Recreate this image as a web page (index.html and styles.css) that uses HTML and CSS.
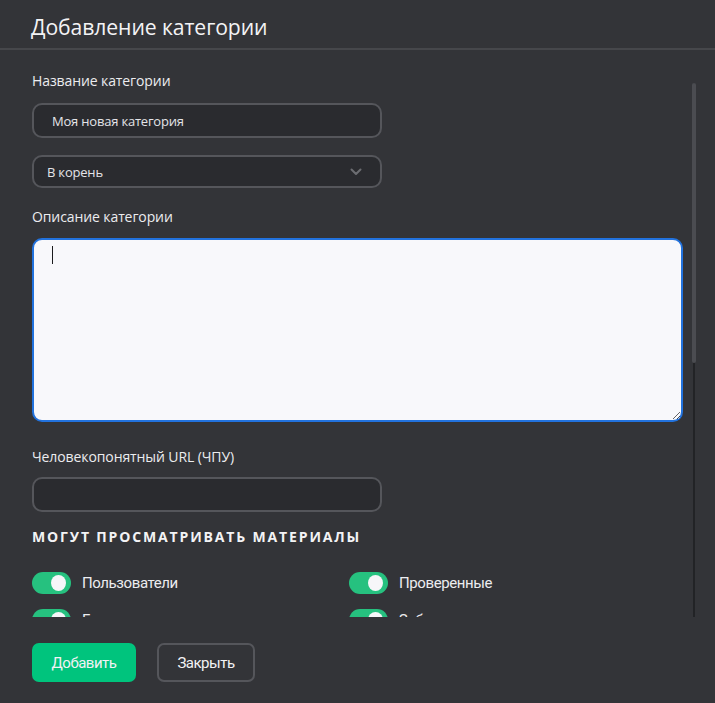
FILE: index.html
```html
<!DOCTYPE html>
<html lang="ru">
<head>
<meta charset="utf-8">
<title>Добавление категории</title>
<link rel="stylesheet" href="styles.css">
</head>
<body>
<div class="modal">
  <header class="modal-header">
    <h1 class="modal-title">Добавление категории</h1>
  </header>
  <div class="modal-body">
    <div class="form">
      <label class="label">Название категории</label>
      <div class="input input-text">Моя новая категория</div>
      <div class="input select">
        <span>В корень</span>
        <svg class="chevron" width="12" height="8" viewBox="0 0 12 8"><path d="M1.5 1.5 L6 6 L10.5 1.5" fill="none" stroke="#6c6d72" stroke-width="2" stroke-linecap="round" stroke-linejoin="round"/></svg>
      </div>
      <label class="label label-desc">Описание категории</label>
      <div class="textarea-wrap">
        <textarea class="textarea"></textarea>
        <span class="caret"></span>
      </div>
      <label class="label label-url">Человекопонятный URL (ЧПУ)</label>
      <div class="input input-url"></div>
      <h2 class="section-title">Могут просматривать материалы</h2>
      <div class="toggles">
        <div class="toggle-item"><span class="toggle"><span class="knob"></span></span><span class="toggle-label">Пользователи</span></div>
        <div class="toggle-item"><span class="toggle"><span class="knob"></span></span><span class="toggle-label">Проверенные</span></div>
        <div class="toggle-item"><span class="toggle"><span class="knob"></span></span><span class="toggle-label">Гости</span></div>
        <div class="toggle-item"><span class="toggle"><span class="knob"></span></span><span class="toggle-label">Заблокированные</span></div>
      </div>
    </div>
    <div class="scrollbar"><span class="thumb"></span></div>
  </div>
  <footer class="modal-footer">
    <button class="btn btn-primary">Добавить</button>
    <button class="btn btn-outline">Закрыть</button>
  </footer>
</div>
</body>
</html>
```
FILE: styles.css
```css
html, body {
  margin: 0;
  padding: 0;
  background: #333438;
}
body {
  font-family: "Open Sans", "Noto Sans", sans-serif;
  color: #ececef;
}
.modal {
  width: 715px;
  height: 703px;
  display: flex;
  flex-direction: column;
  background: #333438;
}
.modal-header {
  height: 48px;
  border-bottom: 2px solid #46474b;
  padding-left: 31px;
  display: flex;
  align-items: center;
  flex-shrink: 0;
}
.modal-title {
  margin: 0;
  font-size: 21.2px;
  font-weight: 400;
  color: #f3f3f5;
  letter-spacing: -0.1px;
  position: relative;
  top: 2px;
}
.modal-body {
  height: 567px;
  flex-shrink: 0;
  overflow: hidden;
  position: relative;
}
.form {
  padding: 21px 32px 0 32px;
  display: flex;
  flex-direction: column;
}
.label {
  font-size: 14px;
  line-height: 20px;
  height: 20px;
  color: #ececef;
  letter-spacing: -0.1px;
}
.input {
  box-sizing: border-box;
  width: 350px;
  border: 2px solid #55565b;
  border-radius: 10px;
  background: #2a2b2f;
  font-size: 13px;
  color: #e4e4e8;
  display: flex;
  align-items: center;
}
.input-text {
  margin-top: 12px;
  height: 35px;
  padding-left: 18px;
  letter-spacing: -0.2px;
}
.select {
  margin-top: 17px;
  height: 33px;
  padding: 0 18px 0 13px;
  justify-content: space-between;
  letter-spacing: -0.2px;
}
.chevron {
  margin-top: 1px;
}
.label-desc {
  margin-top: 19px;
}
.textarea-wrap {
  margin-top: 11px;
  position: relative;
  width: 651px;
  height: 184px;
}
.textarea {
  box-sizing: border-box;
  display: block;
  width: 651px;
  height: 184px;
  margin: 0;
  border: 2px solid #2272dd;
  border-radius: 10px;
  background: #f8f8fb;
  resize: vertical;
  outline: none;
  padding: 8px 18px;
}
.caret {
  position: absolute;
  left: 20px;
  top: 8px;
  width: 1px;
  height: 18px;
  background: #1b1b1d;
}
.label-url {
  margin-top: 25px;
}
.input-url {
  margin-top: 10px;
  height: 35px;
}
.section-title {
  margin: 15px 0 0 0;
  font-size: 14px;
  line-height: 20px;
  font-weight: 700;
  text-transform: uppercase;
  letter-spacing: 1.85px;
  color: #f3f3f5;
}
.toggles {
  margin-top: 25px;
  display: grid;
  grid-template-columns: 317px 317px;
  row-gap: 15px;
}
.toggle-item {
  display: flex;
  align-items: center;
  height: 22px;
}
.toggle {
  width: 39px;
  height: 22px;
  border-radius: 11px;
  background: #26c17f;
  position: relative;
  flex-shrink: 0;
}
.knob {
  position: absolute;
  right: 5px;
  top: 3px;
  width: 15px;
  height: 16px;
  border-radius: 50%;
  background: #f6f6f9;
}
.toggle-label {
  margin-left: 11px;
  font-family: "Roboto", sans-serif;
  font-size: 15px;
  letter-spacing: -0.4px;
  color: #ececef;
}
.scrollbar {
  position: absolute;
  left: 693px;
  top: 33px;
  width: 2px;
  height: 534px;
  background: #222326;
}
.thumb {
  position: absolute;
  left: -1px;
  top: 0;
  width: 4px;
  height: 280px;
  border-radius: 2px;
  background: #4b4c51;
}
.modal-footer {
  flex: 1;
  padding: 26px 32px 0 32px;
  display: flex;
  align-items: flex-start;
  gap: 21px;
}
.btn {
  height: 39px;
  border-radius: 7px;
  font-family: "Roboto", sans-serif;
  font-size: 15px;
  letter-spacing: -0.5px;
  color: #f2f2f4;
  cursor: pointer;
  padding: 0;
}
.btn-primary {
  width: 104px;
  background: #00c47d;
  border: none;
}
.btn-outline {
  width: 98px;
  background: transparent;
  border: 2px solid #55565b;
}
```
